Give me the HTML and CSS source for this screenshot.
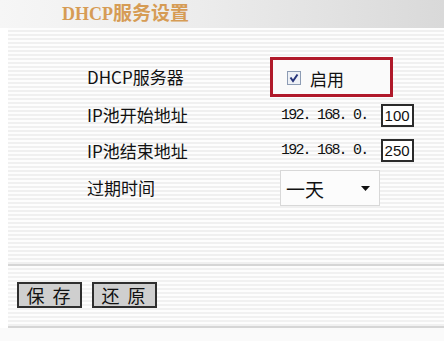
FILE: index.html
```html
<!DOCTYPE html>
<html lang="zh-CN">
<head>
  <meta charset="UTF-8" />
  <meta name="viewport" content="width=device-width, initial-scale=1.0"/>
  <title>DHCP服务设置</title>
  <link rel="stylesheet" href="styles.css">
</head>
<body>

<div class="header">
  <h1 class="title"><span class="latin">DHCP</span>服务设置</h1>
</div>

<!-- FORM -->
<div class="panel">
  <div class="form">
    <div class="label">DHCP服务器</div>
    <div class="value">
      <label class="enable-box">
        <span class="check">
          <svg width="14" height="14" viewBox="0 0 14 14">
            <rect x="0.5" y="0.5" width="13" height="13" fill="#eef1f6" stroke="#8d9cb4"/>
            <path d="M3.5 6.5 L6 10 L10.5 3.5" fill="none" stroke="#27347a" stroke-width="2"/>
          </svg>
        </span>
        <span class="enable-text">启用</span>
      </label>
    </div>

    <div class="label">IP池开始地址</div>
    <div class="value ip">192. 168. 0. <span class="octet">100</span></div>

    <div class="label">IP池结束地址</div>
    <div class="value ip">192. 168. 0. <span class="octet">250</span></div>

    <div class="label">过期时间</div>
    <div class="value">
      <div class="select">
        <span>一天</span>
        <svg width="9" height="5" viewBox="0 0 9 5"><path d="M0 0 H9 L4.5 5 Z" fill="#111"/></svg>
      </div>
    </div>
  </div>
</div>

<div class="rule"></div>

<!-- BUTTONS -->
<div class="actions">
  <button class="btn">保 存</button>
  <button class="btn">还 原</button>
</div>

<div class="rule"></div>
<div class="footer"></div>

</body>
</html>
```

FILE: styles.css
```css
*{box-sizing:border-box}

body {
  margin:0;
  width:444px;
  height:341px;
  overflow:hidden;
  background:#fff;
  color:#111;
  font-family:"Noto Sans CJK SC",sans-serif;
}

.header {
  height:28px;
  background:linear-gradient(90deg,#f6f6f6 0%,#ececec 45%,#d9d9d9 100%);
  padding-left:62px;
}

.title {
  margin:0;
  font-size:19px;
  line-height:24px;
  font-weight:700;
  color:#d69c55;
}

.title .latin {font-family:"Liberation Serif",serif;font-size:18px}

.panel {
  margin-left:8px;
  height:236px;
  padding:29px 0 0 79px;
  background:repeating-linear-gradient(to bottom,#fdfdfd 0 2px,#f0f0f0 2px 4px);
}

.form {
  display:grid;
  grid-template-columns:183px auto;
  grid-template-rows:40px 36px 35px 40px;
  align-items:center;
}

.label {font-size:17px;line-height:20px}

.enable-box {
  display:flex;
  align-items:center;
  gap:9px;
  width:123px;
  height:40px;
  border:3px solid #b0192a;
  padding:2px 0 0 14px;
  background:#fafafa;
}

.check {display:flex}
.enable-text {font-size:17px}

.ip {
  padding-left:11px;
  font-family:"Liberation Mono",monospace;
  font-size:15px;
  letter-spacing:-1.8px;
  display:flex;
  align-items:center;
  white-space:pre;
}

.octet {
  margin-left:6px;
  width:33px;
  height:23px;
  border:2px solid #2b2b2b;
  background:#fff;
  display:flex;
  align-items:center;
  justify-content:center;
  font-family:"Liberation Sans",sans-serif;
  font-size:15px;
  letter-spacing:0;
}

.select {
  margin-left:10px;
  width:100px;
  height:36px;
  border:1px solid #d8d8d8;
  background:#fcfcfc;
  display:flex;
  align-items:center;
  justify-content:space-between;
  padding:0 9px 0 5px;
  font-size:19px;
}

.rule {
  height:2px;
  margin-left:8px;
  background:#d6d6d6;
}

.actions {
  height:60px;
  margin-left:8px;
  padding:16px 0 0 9px;
  display:flex;
  gap:10px;
  align-items:flex-start;
  background:repeating-linear-gradient(to bottom,#fdfdfd 0 2px,#f1f1f1 2px 4px);
}

.btn {
  width:65px;
  height:26px;
  border:2px solid #2e2e2e;
  background:#cfcfcf;
  font-family:"Noto Sans CJK SC",sans-serif;
  font-size:18px;
  line-height:20px;
  color:#111;
  padding:0;
  letter-spacing:2px;
}

.footer {
  height:13px;
  background:#fafafa;
}
```
